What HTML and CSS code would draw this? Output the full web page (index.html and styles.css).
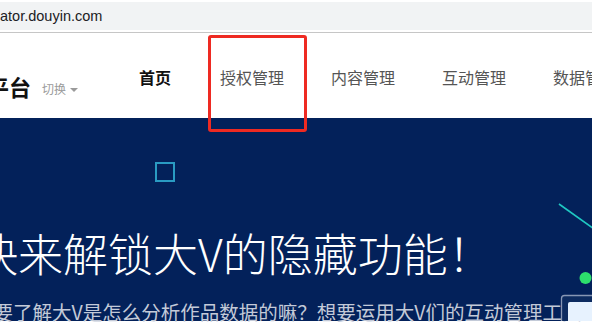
FILE: index.html
```html
<!DOCTYPE html>
<html lang="zh">
<head>
<meta charset="utf-8">
<link rel="stylesheet" href="styles.css">
</head>
<body>
<div class="browserbar">
  <div class="urlbox"><span class="url">ator.douyin.com</span></div>
</div>
<header class="nav">
  <div class="brand">
    <span class="logo">平台</span>
    <span class="switch">切换<span class="caret"></span></span>
  </div>
  <nav class="links">
    <a class="link active">首页</a>
    <a class="link">授权管理</a>
    <a class="link">内容管理</a>
    <a class="link">互动管理</a>
    <a class="link">数据管理</a>
  </nav>
  <div class="highlight"></div>
</header>
<section class="hero">
  <div class="square"></div>
  <h1 class="title">快来解锁大V的隐藏功能！</h1>
  <p class="sub">想要了解大V是怎么分析作品数据的嘛？想要运用大V们的互动管理工具吗？</p>
  <svg class="decor" width="52" height="142" viewBox="0 0 52 142">
    <line x1="19" y1="25" x2="54" y2="50" stroke="#1fc8c2" stroke-width="1.6"/>
    <circle cx="45.5" cy="99" r="6" fill="#2ddf6c"/>
    <rect x="21.5" y="116.5" width="40" height="40" rx="3" fill="#0d2b60" stroke="#8796b4" stroke-width="1.3"/>
    <rect x="28" y="123" width="40" height="40" rx="2" fill="#e7f2fe"/>
  </svg>
</section>
</body>
</html>
```
FILE: styles.css
```css
html, body {
  margin: 0;
  padding: 0;
}
body {
  width: 592px;
  height: 322px;
  overflow: hidden;
  background: #ffffff;
  font-family: "Noto Sans CJK SC", "Noto Sans", sans-serif;
  position: relative;
}
.browserbar {
  height: 33px;
  border-bottom: 1px solid #c6c6c6;
  padding-top: 2px;
  box-sizing: border-box;
  background: #ffffff;
}
.urlbox {
  height: 28px;
  background: #f1f3f4;
  display: flex;
  align-items: center;
}
.url {
  font-family: "Liberation Sans", Arial, sans-serif;
  font-size: 14.5px;
  color: #202124;
  margin-left: 0;
}
.nav {
  height: 85px;
  display: flex;
  align-items: flex-start;
  background: #ffffff;
  white-space: nowrap;
}
.brand {
  display: flex;
  align-items: center;
  margin-left: -13px;
  margin-top: 38px;
  height: 30px;
}
.logo {
  font-size: 22px;
  font-weight: 700;
  color: #111;
  line-height: 30px;
}
.switch {
  margin-left: 11px;
  margin-top: 6px;
  font-size: 12px;
  color: #9a9a9a;
  display: flex;
  align-items: center;
  line-height: 16px;
}
.caret {
  width: 0;
  height: 0;
  border-left: 4px solid transparent;
  border-right: 4px solid transparent;
  border-top: 4px solid #9a9a9a;
  margin-left: 4px;
  margin-top: 1px;
}
.links {
  display: flex;
  gap: 47px;
  margin-left: 61px;
  margin-top: 32px;
}
.link {
  font-size: 16px;
  line-height: 24px;
  color: #555555;
}
.link.active {
  color: #111111;
  font-weight: 700;
  margin-right: 2px;
}
.highlight {
  position: absolute;
  left: 208px;
  top: 35px;
  width: 99px;
  height: 97px;
  box-sizing: border-box;
  border: 3px solid #ee2a22;
  border-radius: 3px;
  z-index: 5;
}
.hero {
  position: relative;
  height: 203px;
  background: #03215a;
  padding-top: 105px;
  box-sizing: border-box;
  white-space: nowrap;
}
.square {
  position: absolute;
  left: 155px;
  top: 44px;
  width: 20px;
  height: 20px;
  box-sizing: border-box;
  border: 2px solid #2a9bc3;
}
.title {
  margin: 0 0 0 -27px;
  font-size: 45px;
  line-height: 60px;
  font-weight: 300;
  color: #ffffff;
}
.sub {
  margin: 16px 0 0 -26px;
  font-size: 19.5px;
  line-height: 26px;
  color: #c3cad8;
}
.decor {
  position: absolute;
  left: 540px;
  top: 61px;
}
```
